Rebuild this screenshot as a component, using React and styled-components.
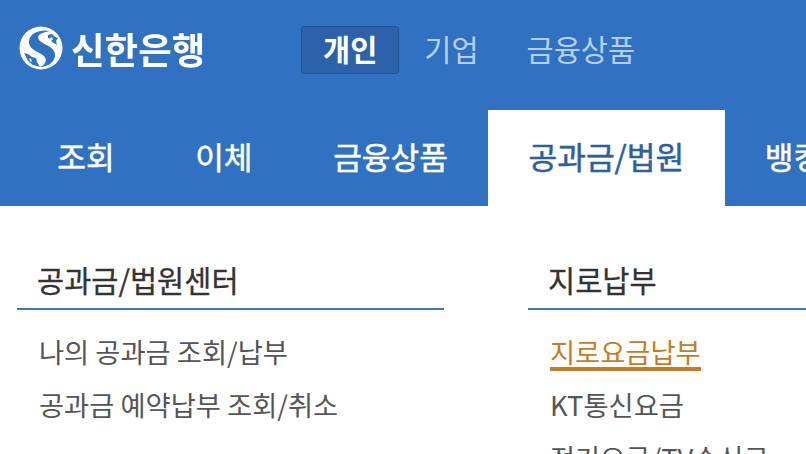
import React from 'react';
import styled, { createGlobalStyle } from 'styled-components';

const Global = createGlobalStyle`
  html, body { margin: 0; padding: 0; background: #fff; overflow: hidden; }
  body { font-family: "Noto Sans CJK KR", "Noto Sans", sans-serif; }
`;

const Page = styled.div`
  width: 806px;
  height: 454px;
  overflow: hidden;
  background: #fff;
`;

const Header = styled.header`
  background: #3071c1;
  height: 206px;
`;

const TopBar = styled.div`
  display: flex;
  align-items: center;
  height: 110px;
  padding: 0 0 10px 19px;
  box-sizing: border-box;
`;

const Logo = styled.div`
  display: flex;
  align-items: center;
  gap: 8px;
  width: 282px;
  margin-top: -4px;
  color: #fff;
  font-size: 36.5px;
  font-weight: 700;
  filter: blur(0.5px);
`;

const Segments = styled.nav`
  display: flex;
  align-items: center;
  gap: 24px;
`;

const Segment = styled.span`
  font-size: 29.5px;
  line-height: 43px;
  box-sizing: border-box;
  height: 48px;
  color: ${p => (p.$active ? '#fff' : '#b5d0f2')};
  font-weight: ${p => (p.$active ? 700 : 400)};
  background: ${p => (p.$active ? '#2b62a9' : 'transparent')};
  border: 1px solid ${p => (p.$active ? '#1f5595' : 'transparent')};
  border-radius: 3px;
  padding: ${p => (p.$active ? '0 21px' : '0')};
  margin-left: ${p => (p.$far ? '22px' : '0')};
`;

const Tabs = styled.nav`
  display: flex;
  height: 96px;
  padding-left: 16.9px;
  white-space: nowrap;
`;

const Tab = styled.a`
  display: flex;
  align-items: center;
  justify-content: center;
  flex: none;
  padding: 0 40.3px 6px;
  font-size: 31.2px;
  font-weight: 400;
  -webkit-text-stroke: 0.5px currentColor;
  color: ${p => (p.$active ? '#2b609f' : '#fff')};
  background: ${p => (p.$active ? '#fff' : 'transparent')};
`;

const Columns = styled.main`
  display: flex;
  gap: 84px;
  padding: 50px 0 0 17px;
`;

const Column = styled.section`
  flex: none;
  width: ${p => p.$width}px;
`;

const Heading = styled.h2`
  margin: 0;
  height: 54px;
  box-sizing: border-box;
  border-bottom: 2px solid #4277bf;
  padding-left: 20px;
  font-size: 29.5px;
  line-height: 46px;
  font-weight: 400;
  -webkit-text-stroke: 0.3px currentColor;
  color: #333;
  white-space: nowrap;
`;

const List = styled.ul`
  list-style: none;
  margin: 0;
  padding: 15px 0 0 22px;
`;

const Item = styled.li`
  height: 53px;
  font-size: 27.3px;
  line-height: 53px;
  color: #555;
  white-space: nowrap;
`;

const Current = styled.a`
  display: inline-block;
  line-height: 32px;
  color: #c47c26;
  border-bottom: 4px solid #c47c26;
`;

const LogoMark = () => (
  <svg width="44" height="44" viewBox="0 0 44 44">
    <circle cx="22" cy="22" r="21.5" fill="#fff" />
    <path
      d="M31 5C23 3 11 6 10 15c-1 7 7 10 12 13 4 2 6 5 4 9-1 2-3 3-5 4 7 0 14-4 15-11 1-7-7-10-12-13-4-2-6-5-4-8 2-2 6-3 11-4z"
      fill="#3071c1"
    />
    <path d="M29 9l4-1 3 3 3 1-2 3 1 4-5-3-1-3-3-1z" fill="#3071c1" />
    <path d="M5 27l4 1 4 3 4 1 1 4 3 5-7-2-5-4z" fill="#3071c1" />
    <path d="M31 12l2-1 1 3-2 0z M10 32l2 1 1 3-2-1z" fill="#fff" />
  </svg>
);

export default function App() {
  return (
    <Page>
      <Global />
      <Header>
        <TopBar>
          <Logo>
            <LogoMark />
            신한은행
          </Logo>
          <Segments>
            <Segment $active>개인</Segment>
            <Segment>기업</Segment>
            <Segment $far>금융상품</Segment>
          </Segments>
        </TopBar>
        <Tabs>
          <Tab>조회</Tab>
          <Tab>이체</Tab>
          <Tab>금융상품</Tab>
          <Tab $active>공과금/법원</Tab>
          <Tab>뱅킹관리</Tab>
        </Tabs>
      </Header>
      <Columns>
        <Column $width={427}>
          <Heading>공과금/법원센터</Heading>
          <List>
            <Item>나의 공과금 조회/납부</Item>
            <Item>공과금 예약납부 조회/취소</Item>
          </List>
        </Column>
        <Column $width={400}>
          <Heading>지로납부</Heading>
          <List>
            <Item><Current>지로요금납부</Current></Item>
            <Item>KT통신요금</Item>
            <Item>전기요금/TV수신료</Item>
          </List>
        </Column>
      </Columns>
    </Page>
  );
}
